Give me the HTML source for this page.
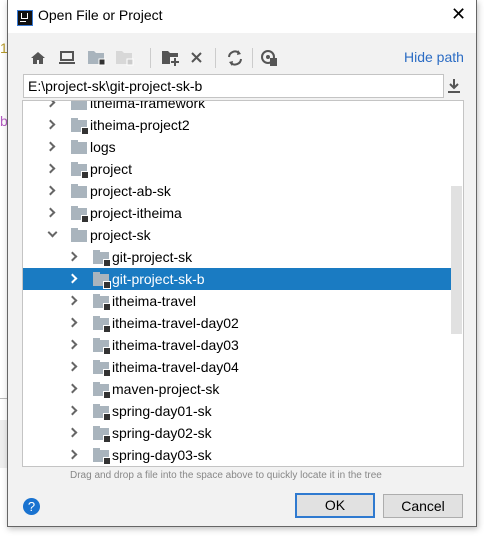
<!DOCTYPE html><html><head><style>
body{margin:0;width:484px;height:536px;background:#fff;position:relative;overflow:hidden;font-family:"Segoe UI","Liberation Sans",sans-serif;}
.a{position:absolute}
.dlg{left:7px;top:0;width:468px;height:526px;background:#f2f2f2;border:1px solid #666;border-top:none;box-shadow:1px 2px 6px rgba(0,0,0,.25)}
.title{left:0;top:0;width:468px;height:33px;background:#fff}
.tree{left:14px;top:100px;width:440px;height:365px;background:#fff;border:1px solid #c4c4c4;overflow:hidden}
.row{position:absolute;left:0;width:428px;height:22px;font-size:14px;line-height:22px;color:#000}
.sel{background:#1a7bc2;color:#fff}
.arr{position:absolute;top:7px;width:5px;height:5px;border-right:2px solid #666;border-bottom:2px solid #666;transform:rotate(-45deg)}
.sel .arr{border-color:#fff}
.fd{position:absolute;top:6px;width:16px;height:12px;background:#a9b4bd}
.fd:before{content:"";position:absolute;left:0;top:-2px;width:7px;height:3px;background:#a9b4bd}
.fd.m:after{content:"";position:absolute;right:-2px;bottom:-3px;width:6px;height:6px;background:#333;border:1px solid #fff}
.btn{height:22px;border:1px solid #adadad;background:#e1e1e1;font-size:14px;text-align:center;line-height:22px}
</style></head><body>
<div class="a" style="left:0;top:398px;width:7px;height:1px;background:#bbb"></div>
<div class="a" style="left:0;top:420px;width:7px;height:48px;background:#eee"></div>
<div class="a" style="left:0;top:40px;color:#b59a2a;font-size:14px">1</div>
<div class="a" style="left:0;top:113px;color:#b35bc1;font-size:14px">b</div>
<div class="a dlg">
 <div class="a title">
  <div class="a" style="left:9px;top:10px;width:14px;height:14px;background:#111;border:1px solid #3a7bd5"><div class="a" style="left:3px;top:2px;width:5px;height:5px;border:1px solid #fff;border-top:none"></div><div class="a" style="left:2px;top:10px;width:6px;height:1px;background:#fff"></div></div>
  <div class="a" style="left:30px;top:7px;font-size:14px">Open File or Project</div>
  <div class="a" style="left:443px;top:4px;font-size:18px;font-weight:300">✕</div>
 </div>
 <svg class="a" style="left:20px;top:46px" width="250" height="24">
  <path d="M10 6l-7 6h2v6h4v-4h2v4h4v-6h2z" fill="#555"/>
  <rect x="33" y="6" width="12" height="8" fill="none" stroke="#555" stroke-width="2"/><rect x="31" y="16" width="16" height="2" fill="#555"/>
  <path d="M60 5h6l2 2h8v11h-16z" fill="#a9b4bd"/><rect x="71" y="13" width="6" height="6" fill="#333" stroke="#fff"/>
  <path d="M88 5h6l2 2h8v11h-16z" fill="#d8d8d8"/><rect x="99" y="13" width="6" height="6" fill="#ccc" stroke="#fff"/>
  <rect x="122" y="2" width="1" height="20" fill="#ccc"/>
  <path d="M134 5h6l2 2h8v11h-16z" fill="#555"/><rect x="142" y="11" width="10" height="10" fill="#f2f2f2"/><path d="M147 12v8M143 16h8" stroke="#555" stroke-width="2"/>
  <path d="M164 7l9 9M173 7l-9 9" stroke="#555" stroke-width="2"/>
  <rect x="187" y="2" width="1" height="20" fill="#ccc"/>
  <path d="M201 11a6 6 0 0 1 10-4M213 13a6 6 0 0 1-10 4" fill="none" stroke="#555" stroke-width="2"/><path d="M210 4l3 4-4 1zM204 20l-3-4 4-1z" fill="#555"/>
  <rect x="224" y="2" width="1" height="20" fill="#ccc"/>
  <circle cx="240" cy="11" r="6" fill="none" stroke="#555" stroke-width="2"/><circle cx="240" cy="11" r="2" fill="#555"/><rect x="242" y="12" width="7" height="8" fill="#555"/>
 </svg>
 <div class="a" style="left:396px;top:49px;font-size:14px;color:#2b6cc4">Hide path</div>
 <div class="a" style="left:15px;top:74px;background:#fff;border:1px solid #c4c4c4;font-size:14px;line-height:22px;padding-left:4px;box-sizing:border-box;width:421px;height:24px">E:\project-sk\git-project-sk-b</div>
 <svg class="a" style="left:439px;top:77px" width="16" height="18"><path d="M7 2v9M3 7l4 4 4-4" stroke="#555" stroke-width="2" fill="none"/><rect x="1" y="14" width="12" height="2" fill="#555"/></svg>
 <div class="a tree">
  <div class="row" style="top:-9px"><span class="arr" style="left:24px"></span><span class="fd" style="left:48px"></span><span style="position:absolute;left:67px">itheima-framework</span></div>
  <div class="row" style="top:13px"><span class="arr" style="left:24px"></span><span class="fd m" style="left:48px"></span><span style="position:absolute;left:67px">itheima-project2</span></div>
  <div class="row" style="top:35px"><span class="arr" style="left:24px"></span><span class="fd" style="left:48px"></span><span style="position:absolute;left:67px">logs</span></div>
  <div class="row" style="top:57px"><span class="arr" style="left:24px"></span><span class="fd m" style="left:48px"></span><span style="position:absolute;left:67px">project</span></div>
  <div class="row" style="top:79px"><span class="arr" style="left:24px"></span><span class="fd" style="left:48px"></span><span style="position:absolute;left:67px">project-ab-sk</span></div>
  <div class="row" style="top:101px"><span class="arr" style="left:24px"></span><span class="fd m" style="left:48px"></span><span style="position:absolute;left:67px">project-itheima</span></div>
  <div class="row" style="top:123px"><span class="arr" style="left:26px;top:5px;transform:rotate(45deg)"></span><span class="fd" style="left:48px"></span><span style="position:absolute;left:67px">project-sk</span></div>
  <div class="row" style="top:145px"><span class="arr" style="left:46px"></span><span class="fd m" style="left:70px"></span><span style="position:absolute;left:89px">git-project-sk</span></div>
  <div class="row sel" style="top:167px"><span class="arr" style="left:46px"></span><span class="fd m" style="left:70px"></span><span style="position:absolute;left:89px">git-project-sk-b</span></div>
  <div class="row" style="top:189px"><span class="arr" style="left:46px"></span><span class="fd m" style="left:70px"></span><span style="position:absolute;left:89px">itheima-travel</span></div>
  <div class="row" style="top:211px"><span class="arr" style="left:46px"></span><span class="fd m" style="left:70px"></span><span style="position:absolute;left:89px">itheima-travel-day02</span></div>
  <div class="row" style="top:233px"><span class="arr" style="left:46px"></span><span class="fd m" style="left:70px"></span><span style="position:absolute;left:89px">itheima-travel-day03</span></div>
  <div class="row" style="top:255px"><span class="arr" style="left:46px"></span><span class="fd m" style="left:70px"></span><span style="position:absolute;left:89px">itheima-travel-day04</span></div>
  <div class="row" style="top:277px"><span class="arr" style="left:46px"></span><span class="fd m" style="left:70px"></span><span style="position:absolute;left:89px">maven-project-sk</span></div>
  <div class="row" style="top:299px"><span class="arr" style="left:46px"></span><span class="fd m" style="left:70px"></span><span style="position:absolute;left:89px">spring-day01-sk</span></div>
  <div class="row" style="top:321px"><span class="arr" style="left:46px"></span><span class="fd m" style="left:70px"></span><span style="position:absolute;left:89px">spring-day02-sk</span></div>
  <div class="row" style="top:343px"><span class="arr" style="left:46px"></span><span class="fd m" style="left:70px"></span><span style="position:absolute;left:89px">spring-day03-sk</span></div>
  <div class="a" style="left:428px;top:85px;width:11px;height:148px;background:rgba(200,200,200,.55)"></div>
 </div>
 <div class="a" style="left:62px;top:470px;font-size:10px;color:#888">Drag and drop a file into the space above to quickly locate it in the tree</div>
 <div class="a" style="left:15px;top:498px;width:17px;height:17px;border-radius:50%;background:#1a73d0;color:#fff;font-size:13px;text-align:center;line-height:17px">?</div>
 <div class="a btn" style="left:287px;top:493px;width:76px;border:2px solid #2f7ad0;height:21px;line-height:21px">OK</div>
 <div class="a btn" style="left:375px;top:494px;width:78px">Cancel</div>
</div>
</body></html>
